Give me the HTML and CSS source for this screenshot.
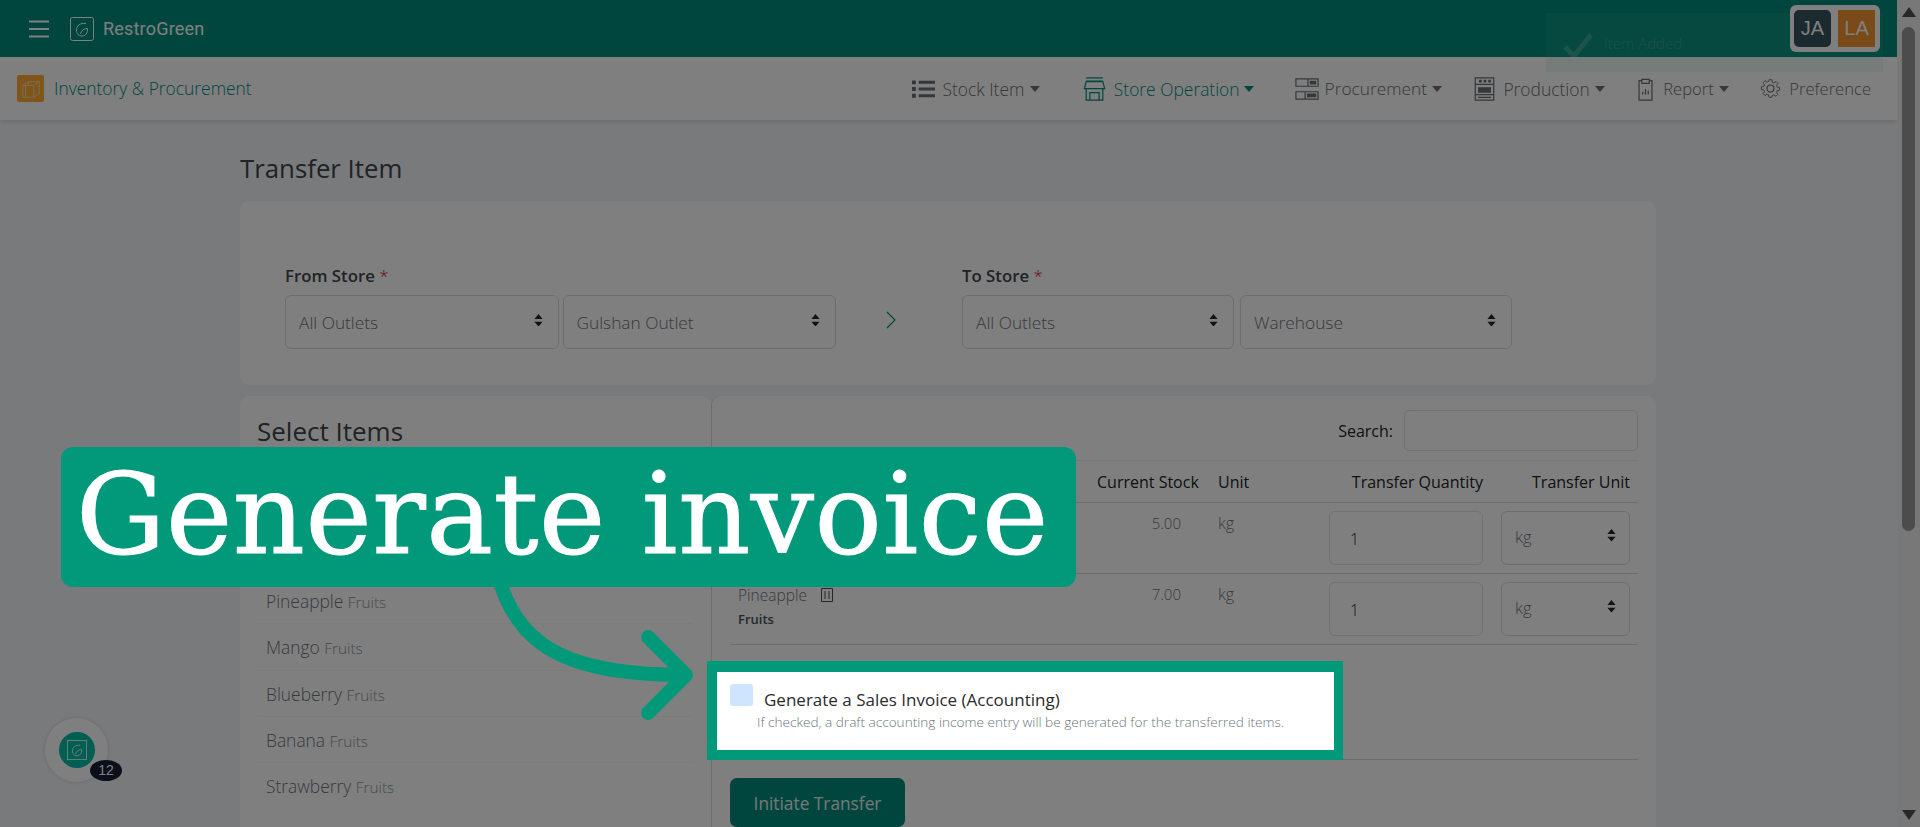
FILE: index.html
```html
<!DOCTYPE html>
<html lang="en">
<head>
<meta charset="utf-8">
<title>Transfer Item</title>
<link rel="stylesheet" href="styles.css">
</head>
<body>
<div class="app">
  <div class="page">
    <header class="topbar">
      <svg class="burger" viewBox="0 0 20 18"><path d="M0 1.500h20M0 9h20M0 16.500h20"/></svg>
      <svg class="logo" viewBox="0 0 24 24"><rect x=".5" y=".5" width="23" height="23" rx="2"/><path d="M16 6.500C10 5.500 6.500 9 6.500 13c0 4 2.500 6 5.500 6 3.500 0 6-3 5.500-7.500-3.500 0-6.500 2-7 5.500"/></svg>
      <span class="brand">RestroGreen</span>
      <div class="avatars"><span class="avatar avatar-dark">JA</span><span class="avatar avatar-orange">LA</span></div>
    </header>
    <nav class="subnav">
      <div class="module">
        <span class="module-icon"><svg viewBox="0 0 24 24"><path d="M3 8l6-4h12v13l-6 4H3zM3 8h12v13M15 8l6-4M9 4v4M6 8v13"/></svg></span>
        <span class="module-name">Inventory &amp; Procurement</span>
      </div>
      <ul class="menu">
        <li class="menu-item menu-stock"><svg class="menu-icon" viewBox="0 0 24 20"><path class="solid" d="M0 1h4v4H0zM7 1.500h17v3H7zM0 8h4v4H0zM7 8.500h17v3H7zM0 15h4v4H0zM7 15.500h17v3H7z"/></svg><span>Stock Item</span><i class="caret"></i></li>
        <li class="menu-item menu-store active"><svg class="menu-icon" viewBox="0 0 24 26"><path d="M3 1h18M3 4.500h18M3 5h18l2 7.500H1zM3 12.500V25h18V12.500M7 25v-8h10v8"/></svg><span>Store Operation</span><i class="caret"></i></li>
        <li class="menu-item menu-proc"><svg class="menu-icon icon-wide" viewBox="0 0 26 24"><path d="M1 1h24v8H1zM1 15h24v8H1zM14 1v8M11 15v8"/><path class="solid" d="M16 3h7v4h-7zM13 17h10v4H13z"/></svg><span>Procurement</span><i class="caret"></i></li>
        <li class="menu-item menu-prod"><svg class="menu-icon icon-prod" viewBox="0 0 22 26"><path d="M1 1h20v24H1zM1 8h20M1 19h20M4 22h14"/><path class="solid" d="M5 3h3v3H5zM10 3h3v3h-3zM15 3h3v3h-3zM4 11h14v6H4z"/></svg><span>Production</span><i class="caret"></i></li>
        <li class="menu-item menu-report"><svg class="menu-icon icon-narrow" viewBox="0 0 16 26"><path d="M4 4H1v21h14V4h-3M4 2.500h8V7H4zM5 19v-3M8 19v-6M11 19v-4"/></svg><span>Report</span><i class="caret"></i></li>
        <li class="menu-item menu-pref"><svg class="menu-icon icon-gear" viewBox="0 0 24 24"><circle cx="12" cy="12" r="4"/><path d="M10 1h4l.6 3.400 2.300 1 2.900-2 2.800 2.800-2 2.900 1 2.300 3.400.6v4l-3.400.6-1 2.300 2 2.900-2.800 2.800-2.900-2-2.300 1L14 26h-4l-.6-3.400-2.300-1-2.900 2-2.800-2.800 2-2.900-1-2.300L-1 15v-4l3.400-.6 1-2.300-2-2.900 2.800-2.800 2.900 2 2.300-1z" transform="translate(2.400 1.200) scale(.8)"/></svg><span>Preference</span></li>
      </ul>
    </nav>
    <main class="content">
      <h1 class="title">Transfer Item</h1>
      <section class="card store-card">
        <div class="store-group">
          <label class="field-label">From Store <span class="req">*</span></label>
          <div class="select-pair">
            <div class="select"><span>All Outlets</span><svg class="updown" viewBox="0 0 10 14"><path d="M5 0l4.500 5.500H.5zM5 14L.5 8.500h9z"/></svg></div>
            <div class="select"><span>Gulshan Outlet</span><svg class="updown" viewBox="0 0 10 14"><path d="M5 0l4.500 5.500H.5zM5 14L.5 8.500h9z"/></svg></div>
          </div>
        </div>
        <div class="chevron-col"><svg class="chevron" viewBox="0 0 10 18"><path d="M1 1l8 8-8 8"/></svg></div>
        <div class="store-group store-group-to">
          <label class="field-label">To Store <span class="req">*</span></label>
          <div class="select-pair">
            <div class="select"><span>All Outlets</span><svg class="updown" viewBox="0 0 10 14"><path d="M5 0l4.500 5.500H.5zM5 14L.5 8.500h9z"/></svg></div>
            <div class="select"><span>Warehouse</span><svg class="updown" viewBox="0 0 10 14"><path d="M5 0l4.500 5.500H.5zM5 14L.5 8.500h9z"/></svg></div>
          </div>
        </div>
      </section>
      <div class="split">
        <aside class="card items-card">
          <h2 class="items-title">Select Items</h2>
          <ul class="item-list">
            <li class="item-row">Pineapple <small>Fruits</small></li>
            <li class="item-row">Mango <small>Fruits</small></li>
            <li class="item-row">Blueberry <small>Fruits</small></li>
            <li class="item-row">Banana <small>Fruits</small></li>
            <li class="item-row">Strawberry <small>Fruits</small></li>
          </ul>
        </aside>
        <section class="card transfer-card">
          <div class="search-row"><label class="search-label">Search:</label><div class="search-input"></div></div>
          <table class="transfer-table">
            <colgroup><col class="c-item"><col class="c-stock"><col class="c-unit"><col class="c-qty"><col class="c-tunit"></colgroup>
            <thead>
              <tr><th></th><th>Current Stock</th><th>Unit</th><th class="th-right th-qty">Transfer Quantity</th><th class="th-right">Transfer Unit</th></tr>
            </thead>
            <tbody>
              <tr>
                <td></td><td class="num">5.00</td><td>kg</td>
                <td class="td-qty"><div class="qty">1</div></td>
                <td><div class="select select-sm"><span>kg</span><svg class="updown" viewBox="0 0 10 14"><path d="M5 0l4.500 5.500H.5zM5 14L.5 8.500h9z"/></svg></div></td>
              </tr>
              <tr>
                <td><div class="item-name">Pineapple <svg class="trash" viewBox="0 0 14 14"><path d="M1.500.5h11v13h-11zM5 3v8M9 3v8"/></svg></div><div class="item-cat">Fruits</div></td>
                <td class="num">7.00</td><td>kg</td>
                <td class="td-qty"><div class="qty">1</div></td>
                <td><div class="select select-sm"><span>kg</span><svg class="updown" viewBox="0 0 10 14"><path d="M5 0l4.500 5.500H.5zM5 14L.5 8.500h9z"/></svg></div></td>
              </tr>
            </tbody>
          </table>
          <div class="invoice-slot"></div>
          <button class="primary-btn">Initiate Transfer</button>
        </section>
      </div>
    </main>
    <div class="toast"><svg class="toast-check" viewBox="0 0 30 26"><path d="M2 14l9 9L28 2"/></svg><span>Item Added</span></div>
    <div class="chat-bubble">
      <div class="chat-core"><svg class="chat-logo" viewBox="0 0 24 24"><rect x=".5" y=".5" width="23" height="23"/><path d="M16 6.500C10 5.500 6.500 9 6.500 13c0 4 2.500 6 5.500 6 3.500 0 6-3 5.500-7.500-3.500 0-6.500 2-7 5.500"/></svg></div>
      <span class="chat-badge">12</span>
    </div>
  </div>
  <div class="scrollbar">
    <i class="sb-up"></i>
    <div class="sb-thumb"></div>
    <i class="sb-down"></i>
  </div>
  <div class="overlay"></div>
  <div class="callout">Generate invoice</div>
  <svg class="arrow" viewBox="0 0 1920 827"><path d="M501 585C522 650 575 675 686 675M648 637l38 38-38 38"/></svg>
  <div class="highlight">
    <div class="check-line"><span class="checkbox"></span><span class="check-label">Generate a Sales Invoice (Accounting)</span></div>
    <p class="check-help">If checked, a draft accounting income entry will be generated for the transferred items.</p>
  </div>
</div>
</body>
</html>
```

FILE: styles.css
```css
* { box-sizing: border-box; }
html, body { margin: 0; padding: 0; }
body { font-family: "Open Sans", "Noto Sans", sans-serif; font-weight: 300; color: #212529; font-size: 16px; }
.app { position: relative; width: 1920px; height: 827px; overflow: hidden; display: flex; background: #f3f5f8; }
.page { position: relative; z-index: 0; width: 1897px; height: 827px; overflow: hidden; flex: none; }

.topbar { height: 57px; background: #008d7f; display: flex; align-items: center; padding-left: 29px; color: #fff; }
.burger { width: 20px; height: 18px; fill: none; stroke: #fff; stroke-width: 2; }
.logo { width: 24px; height: 24px; margin-left: 21px; fill: none; stroke: #fff; stroke-width: 1; }
.brand { margin-left: 9px; font-family: Roboto, sans-serif; font-weight: 400; font-size: 18px; letter-spacing: .2px; }
.avatars { position: relative; z-index: 2; margin-left: auto; margin-right: 17px; width: 90px; height: 47px; background: #fff; border-radius: 6px; display: flex; align-items: center; gap: 7px; padding-left: 4px; }
.avatar { width: 37px; height: 37px; display: flex; align-items: center; justify-content: center; font-family: "Liberation Sans", sans-serif; font-weight: 400; font-size: 20px; }
.avatar-dark { background: #36545c; border-radius: 5px; }
.avatar-orange { background: #f59530; }

.subnav { height: 63px; background: #fff; display: flex; align-items: center; justify-content: space-between; padding: 0 26px 0 17px; box-shadow: 0 2px 5px rgba(0,0,0,.12); position: relative; }
.module { display: flex; align-items: center; gap: 10px; }
.module-icon { width: 27px; height: 27px; background: #ffaa33; border-radius: 2px; display: flex; align-items: center; justify-content: center; }
.module-icon svg { width: 22px; height: 22px; fill: none; stroke: #fff; stroke-width: 1; opacity: .6; }
.module-name { color: #008d7f; font-size: 17.400px; font-weight: 300; margin-top: -2px; }
.menu { list-style: none; margin: 0; padding: 0; display: flex; align-items: center; }
.menu-item { display: flex; align-items: center; color: #6a6e72; font-size: 17.400px; }
.menu-stock { margin-right: 43px; }
.menu-store { margin-right: 41px; }
.menu-store .caret { margin-left: 4px; }
.menu-proc { margin-right: 31px; font-size: 17.300px; }
.menu-prod { margin-right: 33px; }
.menu-report { margin-right: 31px; font-size: 16.600px; }
.menu-pref { font-size: 16.600px; }
.menu-item.active { color: #008d7f; }
.menu-icon { width: 23px; height: 24px; margin-right: 8px; fill: none; stroke: currentColor; stroke-width: 1.300; }
.icon-wide { width: 24px; margin-right: 6px; }
.icon-prod { margin-right: 7px; }
.icon-narrow { width: 15px; margin-right: 10px; }
.icon-gear { width: 21px; height: 21px; }
.menu-icon .solid { fill: currentColor; stroke: none; }
.caret { width: 0; height: 0; margin-left: 5.500px; border-left: 5px solid transparent; border-right: 5px solid transparent; border-top: 6px solid currentColor; }

.content { width: 1416px; margin-left: 240px; padding-top: 30px; }
.title { margin: 0 0 15px; height: 36px; font-size: 25.800px; line-height: 36px; font-weight: 400; color: #3f464d; }
.card { background: #fff; border-radius: 9px; }
.store-card { height: 184px; padding: 63px 0 0 45px; display: flex; }
.store-group { width: 551px; }
.store-group-to { width: 550px; }
.field-label { display: block; height: 24px; margin-bottom: 7px; line-height: 24px; font-weight: 600; font-size: 16.800px; color: #3f464d; }
.req { color: #dc0a3c; font-weight: 300; }
.select-pair { display: flex; gap: 4px; }
.store-group-to .select-pair { gap: 6px; }
.select { flex: 1; height: 54px; border: 1px solid #d8dbdf; border-radius: 6px; padding: 1px 15px 0 13px; display: flex; align-items: center; justify-content: space-between; color: #6d747b; font-size: 17.300px; font-weight: 300; background: #fff; }
.updown { width: 9px; height: 12.600px; fill: #212529; margin-top: -5px; }
.chevron-col { width: 126px; padding: 47px 0 0 50px; }
.chevron { display: block; width: 10px; height: 18px; fill: none; stroke: #008d7f; stroke-width: 1.200; }

.split { display: flex; margin-top: 11px; align-items: flex-start; }
.items-card { width: 471px; height: 500px; padding: 17px 18px 0 17px; border-radius: 9px; }
.items-title { margin: 0; height: 36px; font-size: 26px; line-height: 36px; font-weight: 400; color: #3f464d; }
.item-list { list-style: none; margin: 129px 0 0 1px; padding: 0; }
.item-row { height: 46.330px; padding-left: 8px; line-height: 46px; border-bottom: 1px solid #f6f7f8; font-size: 17.400px; color: #6d747b; }
.item-row:last-child { border-bottom: none; }
.item-row small { font-size: 15.300px; color: #8c939a; }

.transfer-card { width: 944px; margin-left: 1px; height: 500px; padding: 14px 18px 0; box-shadow: -1px 0 0 #d8dbdf; }
.search-row { display: flex; justify-content: flex-end; align-items: center; gap: 11px; margin-bottom: 9px; }
.search-label { font-size: 16px; font-weight: 400; color: #212529; }
.search-input { width: 234px; height: 41px; border: 1px solid #dee2e6; border-radius: 5px; }
.transfer-table { width: 908px; table-layout: fixed; border-collapse: collapse; border-top: 1px solid #eceef0; }
.c-item { width: 359px; }
.c-stock { width: 121px; }
.c-unit { width: 111px; }
.c-qty { width: 172px; }
.c-tunit { width: 145px; }
.transfer-table th { height: 42px; padding: 0 8px; text-align: left; font-weight: 400; font-size: 16px; border-bottom: 1px solid #d8dbdf; white-space: nowrap; color: #212529; }
.transfer-table .th-right { text-align: right; }
.transfer-table .th-qty { padding-right: 10px; }
.transfer-table td { height: 71px; padding: 8px 8px 0; vertical-align: top; border-bottom: 1px solid #d8dbdf; line-height: 24px; font-size: 16px; color: #6d747b; }
.transfer-table .td-qty { padding-right: 10px; }
.transfer-table .num { text-align: right; padding-right: 29px; font-size: 15px; }
.qty { height: 54px; border: 1px solid #dee2e6; border-radius: 6px; line-height: 54px; padding-left: 20px; font-size: 16px; color: #212529; }
.select-sm { padding: 0 13px 0 13px; font-size: 16.500px; }
.select-sm span { margin-top: -3px; }
.item-name { display: flex; align-items: center; gap: 13px; font-size: 15.500px; margin-top: 1px; }
.trash { width: 14px; height: 14px; fill: none; stroke: #495057; stroke-width: 1; }
.item-cat { font-size: 13px; font-weight: 600; color: #495057; }
.invoice-slot { height: 115px; border-bottom: 1px solid #d8dbdf; }
.primary-btn { display: block; margin-top: 18px; width: 175px; height: 49px; padding: 2px 0 0; border: none; border-radius: 7px; background: #008d7f; color: #e8f2f0; font-family: inherit; font-size: 17.300px; font-weight: 400; }

.toast { position: absolute; left: 1546px; top: 13px; width: 337px; height: 59px; background: rgba(110,200,150,.12); display: flex; align-items: flex-start; padding: 20px 0 0 17px; color: rgba(255,255,255,.18); font-size: 15px; gap: 11px; }
.toast-check { width: 30px; height: 26px; fill: none; stroke: currentColor; stroke-width: 5; }
.chat-bubble { position: absolute; left: 45px; top: 718px; width: 63px; height: 64px; border-radius: 50%; background: #fff; display: flex; align-items: center; justify-content: center; box-shadow: 0 0 4px rgba(0,0,0,.15); }
.chat-core { width: 36px; height: 36px; border-radius: 50%; background: #00bfa5; display: flex; align-items: center; justify-content: center; }
.chat-logo { width: 20px; height: 20px; fill: none; stroke: #fff; stroke-width: 1; }
.chat-badge { position: absolute; left: 45px; top: 42px; width: 32px; height: 21px; border-radius: 50%; background: #141e32; color: #fff; font-family: "Liberation Sans", sans-serif; font-weight: 400; font-size: 14px; line-height: 21px; text-align: center; }

.scrollbar { position: relative; flex: 1; background: #f1f1f1; }
.sb-thumb { position: absolute; left: 5px; top: 27px; width: 13px; height: 504px; border-radius: 7px; background: #989898; }
.sb-up, .sb-down { position: absolute; left: 5px; width: 0; height: 0; border-left: 7px solid transparent; border-right: 7px solid transparent; }
.sb-up { top: 7px; border-bottom: 10px solid #505050; }
.sb-down { bottom: 7px; border-top: 10px solid #505050; }

.overlay { position: absolute; inset: 0; background: rgba(0,0,0,.5); }
.callout { position: absolute; left: 61px; top: 447px; width: 1015px; height: 140px; border-radius: 12px; background: #02997b; color: #fff; font-family: "DejaVu Serif", serif; font-weight: 400; font-size: 112px; line-height: 134px; letter-spacing: .5px; -webkit-text-stroke: 1px #fff; padding-left: 15px; white-space: nowrap; }
.arrow { position: absolute; left: 0; top: 0; width: 1920px; height: 827px; fill: none; stroke: #02997b; stroke-width: 14; stroke-linecap: round; stroke-linejoin: round; pointer-events: none; }
.highlight { position: absolute; left: 707px; top: 661px; width: 636px; height: 99px; background: #fff; border: solid #02997b; border-width: 11px 9px 10px 10px; padding: 12px 13px 0; }
.check-line { display: flex; align-items: flex-start; gap: 11px; }
.checkbox { width: 23px; height: 22px; background: #cfe5fd; border-radius: 3px; flex: none; }
.check-label { margin-top: 4px; font-size: 17px; line-height: 24px; font-weight: 400; color: #2b2b2b; }
.check-help { margin: 0 0 0 27px; font-size: 13.600px; line-height: 20px; font-weight: 300; color: #6c757d; white-space: nowrap; }
```
